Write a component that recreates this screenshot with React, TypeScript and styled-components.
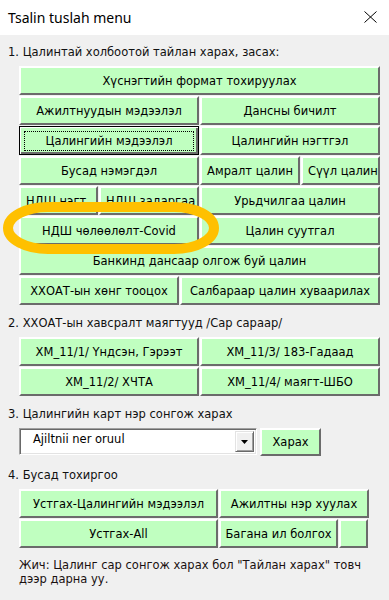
import React from 'react';
import styled, { createGlobalStyle } from 'styled-components';

const Global = createGlobalStyle`
  html, body { margin: 0; padding: 0; background: #f0f0f0; }
  * { box-sizing: border-box; }
`;

const Window = styled.div`
  position: relative;
  width: 389px;
  height: 600px;
  overflow: hidden;
  background: #f0f0f0;
  color: #000;
  font-family: 'DejaVu Sans', Tahoma, sans-serif;
  font-size: 11.5px;
  display: flex;
  flex-direction: column;
`;

const TitleBar = styled.div`
  height: 35px;
  flex: 0 0 35px;
  background: #fff;
  display: flex;
  align-items: center;
  justify-content: space-between;
  padding: 0 12px 1px 8px;
  font-family: 'Noto Sans', 'Open Sans', sans-serif;
  font-size: 14px;
  color: #000;
`;

const Body = styled.div`
  display: flex;
  flex-direction: column;
  padding: 0 8px;
`;

const Label = styled.div<{ $mt: number }>`
  margin-top: ${(p) => p.$mt}px;
  margin-bottom: 6px;
  height: 16px;
  line-height: 16px;
  white-space: nowrap;
  color: #111;
`;

const Grid = styled.div<{ $w: number }>`
  margin-left: 11px;
  width: ${(p) => p.$w}px;
  display: flex;
  flex-direction: column;
  gap: 1px;
`;

const Row = styled.div`
  display: flex;
  gap: 1px;
  height: 29px;
`;

const Btn = styled.button<{ $w: number; $clip?: boolean; $focus?: boolean }>`
  position: relative;
  flex: 0 0 ${(p) => p.$w}px;
  width: ${(p) => p.$w}px;
  height: 100%;
  margin: 0;
  padding: ${(p) => (p.$clip ? '0 0 0 5px' : '0')};
  background: #c0ffc0;
  border: 2px solid;
  border-color: #ffffff #6b6b6b #6b6b6b #ffffff;
  font: inherit;
  color: #000;
  display: flex;
  align-items: center;
  justify-content: ${(p) => (p.$clip ? 'flex-start' : 'center')};
  white-space: nowrap;
  overflow: hidden;
  cursor: default;

  ${(p) =>
    p.$focus &&
    `
    border: 1px solid #000;
    box-shadow: inset 1px 1px #fff, inset -2px -2px #6b6b6b;
    &::after {
      content: '';
      position: absolute;
      left: 4px;
      right: 4px;
      top: 4px;
      bottom: 3px;
      border: 1px dotted #000;
    }
  `}
`;

const PickRow = styled.div`
  margin-left: 11px;
  display: flex;
  align-items: flex-start;
  gap: 3px;
  height: 28px;
`;

const Combo = styled.div`
  width: 238px;
  height: 27px;
  background: #fff;
  border: 1px solid;
  border-color: #a0a0a0 #ffffff #ffffff #a0a0a0;
  box-shadow: inset 1px 1px #696969, inset -1px -1px #e3e3e3;
  display: flex;
  align-items: stretch;
  padding: 2px;
`;

const ComboText = styled.div`
  flex: 1;
  padding: 0 0 5px 11px;
  display: flex;
  align-items: center;
`;

const DropBtn = styled.div`
  width: 19px;
  background: #f0f0f0;
  border: 1px solid;
  border-color: #e3e3e3 #696969 #696969 #e3e3e3;
  box-shadow: inset 1px 1px #fff, inset -1px -1px #a0a0a0;
  display: flex;
  align-items: center;
  justify-content: center;
`;

const ViewBtn = styled(Btn)`
  height: 28px;
`;

const Note = styled.div`
  margin: 10px 0 0 11px;
  line-height: 14px;
  color: #1a1010;
`;

const Highlight = styled.svg`
  position: absolute;
  left: 0;
  top: 195px;
  pointer-events: none;
`;

export default function App() {
  return (
    <Window>
      <Global />
      <TitleBar>
        <span>Tsalin tuslah menu</span>
        <svg width="13" height="12" viewBox="0 0 13 12">
          <path d="M0.5 0.5 L12.5 11.5 M12.5 0.5 L0.5 11.5" stroke="#000" strokeWidth="1" />
        </svg>
      </TitleBar>
      <Body>
        <Label $mt={9}>1. Цалинтай холбоотой тайлан харах, засах:</Label>
        <Grid $w={361}>
          <Row>
            <Btn $w={361}>Хүснэгтийн формат тохируулах</Btn>
          </Row>
          <Row>
            <Btn $w={180}>Ажилтнуудын мэдээлэл</Btn>
            <Btn $w={180}>Дансны бичилт</Btn>
          </Row>
          <Row>
            <Btn $w={180} $focus>Цалингийн мэдээлэл</Btn>
            <Btn $w={180}>Цалингийн нэгтгэл</Btn>
          </Row>
          <Row>
            <Btn $w={180}>Бусад нэмэгдэл</Btn>
            <Btn $w={100}>Амралт цалин</Btn>
            <Btn $w={79} $clip>Сүүл цалин</Btn>
          </Row>
          <Row>
            <Btn $w={79} $clip>НДШ нэгт</Btn>
            <Btn $w={100} $clip>НДШ задаргаа</Btn>
            <Btn $w={180}>Урьдчилгаа цалин</Btn>
          </Row>
          <Row>
            <Btn $w={180}>НДШ чөлөөлөлт-Covid</Btn>
            <Btn $w={180}>Цалин суутгал</Btn>
          </Row>
          <Row>
            <Btn $w={361}>Банкинд дансаар олгож буй цалин</Btn>
          </Row>
          <Row>
            <Btn $w={160}>ХХОАТ-ын хөнг тооцох</Btn>
            <Btn $w={200}>Салбараар цалин хуваарилах</Btn>
          </Row>
        </Grid>

        <Label $mt={10}>2. ХХОАТ-ын хавсралт маягтууд /Сар сараар/</Label>
        <Grid $w={361}>
          <Row>
            <Btn $w={180}>ХМ_11/1/ Үндсэн, Гэрээт</Btn>
            <Btn $w={180}>ХМ_11/3/ 183-Гадаад</Btn>
          </Row>
          <Row>
            <Btn $w={180}>ХМ_11/2/ ХЧТА</Btn>
            <Btn $w={180}>ХМ_11/4/ маягт-ШБО</Btn>
          </Row>
        </Grid>

        <Label $mt={10}>3. Цалингийн карт нэр сонгож харах</Label>
        <PickRow>
          <Combo>
            <ComboText>Ajiltnii ner oruul</ComboText>
            <DropBtn>
              <svg width="7" height="4" viewBox="0 0 7 4">
                <path d="M0 0 H7 L3.5 4 Z" fill="#000" />
              </svg>
            </DropBtn>
          </Combo>
          <ViewBtn $w={61}>Харах</ViewBtn>
        </PickRow>

        <Label $mt={11}>4. Бусад тохиргоо</Label>
        <Grid $w={350}>
          <Row>
            <Btn $w={199}>Устгах-Цалингийн мэдээлэл</Btn>
            <Btn $w={150}>Ажилтны нэр хуулах</Btn>
          </Row>
          <Row>
            <Btn $w={199}>Устгах-All</Btn>
            <Btn $w={119}>Багана ил болгох</Btn>
            <Btn $w={29} />
          </Row>
        </Grid>

        <Note>
          Жич: Цалинг сар сонгож харах бол "Тайлан харах" товч
          <br />
          дээр дарна уу.
        </Note>
      </Body>

      <Highlight width="240" height="70" viewBox="0 0 240 70">
        <rect x="8" y="12" width="206" height="42" rx="40" ry="21" fill="none" stroke="#ffc000" strokeWidth="10" />
      </Highlight>
    </Window>
  );
}
